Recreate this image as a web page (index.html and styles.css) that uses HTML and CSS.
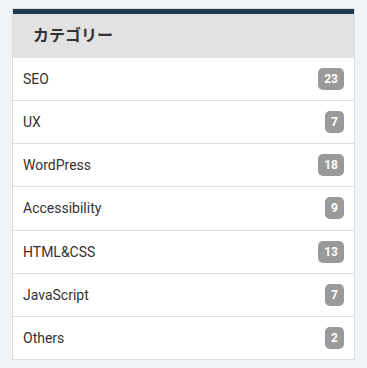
FILE: index.html
```html
<!DOCTYPE html>
<html>
<head>
	<meta charset="utf-8">
	<title>カテゴリー</title>
	<link rel="stylesheet" href="styles.css">
</head>
<body>
	<div class="widget">
		<h3 class="widget-title">カテゴリー</h3>
		<ul class="cat-list">
			<li><a href="#">SEO</a><span class="count">23</span></li>
			<li><a href="#">UX</a><span class="count">7</span></li>
			<li><a href="#">WordPress</a><span class="count">18</span></li>
			<li><a href="#">Accessibility</a><span class="count">9</span></li>
			<li><a href="#">HTML&amp;CSS</a><span class="count">13</span></li>
			<li><a href="#">JavaScript</a><span class="count">7</span></li>
			<li><a href="#">Others</a><span class="count">2</span></li>
		</ul>
	</div><!-- widget -->
</body>
</html>
```

FILE: styles.css
```css
body{
	margin: 0;
	padding: 8px 12px;
	background: #f1f4f7;
	font-family: Roboto, "Noto Sans CJK JP", sans-serif;
	color: #333;
}
.widget{
	width: 341px;
	background: #fff;
	border: 1px solid #dcdcdc;
}
.widget-title{
	margin: 0;
	height: 44px;
	line-height: 44px;
	padding: 0 20px;
	border-top: 5px solid #1c3b52;
	background: #e2e2e2;
	font-size: 16px;
	font-weight: bold;
}
.cat-list{
	list-style: none;
	margin: 0;
	padding: 0;
}
.cat-list li{
	display: flex;
	align-items: center;
	justify-content: space-between;
	height: 42.15px;
	padding: 0 10px;
	border-bottom: 1px solid #e0e0e0;
	font-size: 14px;
}
.cat-list li:last-child{
	border-bottom: none;
}
.cat-list a{
	color: #333;
	text-decoration: none;
}
.count{
	min-width: 18px;
	height: 22px;
	line-height: 22px;
	padding: 0 6px;
	box-sizing: border-box;
	border-radius: 5px;
	background: #9a9a9a;
	color: #fff;
	font-size: 12px;
	font-weight: bold;
	text-align: center;
}
```
